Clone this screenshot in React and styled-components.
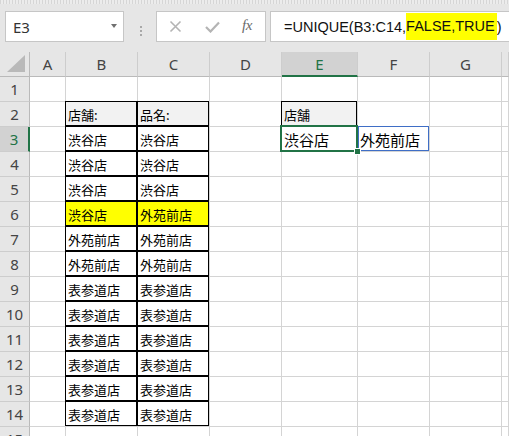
import React from 'react';
import styled, { createGlobalStyle } from 'styled-components';

const Global = createGlobalStyle`
  html, body { margin: 0; padding: 0; background: #fff; }
  body { width: 509px; height: 436px; overflow: hidden; font-family: "Noto Sans", "Liberation Sans", sans-serif; }
`;

const Window = styled.div`
  width: 509px;
  height: 436px;
  overflow: hidden;
  display: flex;
  flex-direction: column;
  background: #fff;
`;

const Toolbar = styled.div`
  flex: none;
  height: 52px;
  box-sizing: border-box;
  display: flex;
  align-items: flex-start;
  padding: 11px 0 0 5px;
  background-color: #e6e6e6;
  background-image: repeating-linear-gradient(90deg, #d6d6d6 0 1px, #ececec 1px 3px);
  background-size: 100% 4px;
  background-repeat: no-repeat;
`;

const NameBox = styled.div`
  width: 119px;
  height: 31px;
  box-sizing: border-box;
  background: #fff;
  border: 1px solid #c6c6c6;
  display: flex;
  align-items: center;
  justify-content: space-between;
  padding: 0 6px 0 7px;
  font-family: "Noto Sans", "Liberation Sans", sans-serif;
  font-size: 15px;
  color: #333;
`;

const Caret = styled.span`
  width: 0;
  height: 0;
  border-left: 3.5px solid transparent;
  border-right: 3.5px solid transparent;
  border-top: 4px solid #707070;
  margin-top: -1px;
`;

const Grip = styled.div`
  width: 16px;
  align-self: stretch;
  display: flex;
  flex-direction: column;
  align-items: center;
  justify-content: center;
  gap: 2px;
  margin: 0 7px 0 9px;
  padding-bottom: 1px;
  & > span {
    width: 2px;
    height: 2px;
    background: #a8a8a8;
  }
`;

const ButtonBox = styled.div`
  width: 110px;
  height: 31px;
  box-sizing: border-box;
  background: #fff;
  border: 1px solid #c6c6c6;
  display: flex;
  align-items: center;
  padding-left: 12px;
  gap: 0;
`;

const IconSlot = styled.span`
  width: ${p => p.$w}px;
  display: flex;
  align-items: center;
  color: ${p => p.$c};
`;

const Fx = styled.span`
  font-family: "Liberation Serif", "DejaVu Serif", serif;
  font-style: italic;
  font-size: 15px;
  color: #6a6a6a;
  letter-spacing: -0.5px;
  margin-top: -2px;
`;

const FormulaInput = styled.div`
  flex: 1;
  height: 31px;
  margin-left: 4px;
  margin-right: -4px;
  box-sizing: border-box;
  background: #fff;
  border: 1px solid #c6c6c6;
  display: flex;
  align-items: center;
  padding-left: 13px;
  font-family: "Liberation Sans", Arial, sans-serif;
  font-size: 14.5px;
  color: #111;
  white-space: nowrap;
`;

const Mark = styled.span`
  display: inline-block;
  height: 27px;
  line-height: 27px;
  background: #ffff00;
  padding-right: 2px;
`;

const Sheet = styled.div`
  display: grid;
  grid-template-columns: 30px 36px 72px 72px 72px 76px 72px 72px 1fr;
  grid-template-rows: 25px repeat(15, 25px);
  background: #fff;
`;

const Corner = styled.div`
  box-sizing: border-box;
  background: #e6e6e6;
  border-right: 1px solid #bababa;
  border-bottom: 1px solid #bababa;
  display: flex;
  align-items: flex-end;
  justify-content: flex-end;
  padding: 0 4px 4px 0;
`;

const ColHead = styled.div`
  box-sizing: border-box;
  background: ${p => (p.$active ? '#d2d2d2' : '#e6e6e6')};
  border-right: 1px solid #cdcdcd;
  border-bottom: ${p => (p.$active ? '2px solid #217346' : '1px solid #bababa')};
  display: flex;
  align-items: center;
  justify-content: center;
  padding-top: ${p => (p.$active ? '1px' : '0')};
  font-family: "Noto Sans", "Liberation Sans", sans-serif;
  font-size: 15px;
  color: ${p => (p.$active ? '#217346' : '#444')};
`;

const RowHead = styled.div`
  box-sizing: border-box;
  background: ${p => (p.$active ? '#d2d2d2' : '#e6e6e6')};
  border-right: ${p => (p.$active ? '2px solid #217346' : '1px solid #bababa')};
  border-bottom: 1px solid #cdcdcd;
  display: flex;
  align-items: center;
  justify-content: center;
  font-family: "Noto Sans", "Liberation Sans", sans-serif;
  font-size: 15px;
  color: ${p => (p.$active ? '#217346' : '#444')};
`;

const Cell = styled.div`
  position: relative;
  z-index: ${p => (p.$selected ? 2 : 'auto')};
  box-sizing: border-box;
  border-right: 1px solid #d4d4d4;
  border-bottom: 1px solid #d4d4d4;
  background: ${p => p.$fill || '#fff'};
  display: flex;
  align-items: center;
  padding: 0 0 0 2px;
  font-family: "Noto Sans CJK JP", "Noto Sans", sans-serif;
  font-size: ${p => (p.$big ? '15px' : '13px')};
  color: #000;
  white-space: nowrap;

  ${p => p.$boxed && `
    &::before {
      content: '';
      position: absolute;
      top: -1px; left: -1px; right: 0; bottom: 0;
      border: 1px solid #000;
      pointer-events: none;
      z-index: 1;
    }
  `}

  ${p => p.$spill && `
    &::before {
      content: '';
      position: absolute;
      top: -1px; left: 0; right: 0; bottom: 0;
      border: 1px solid #3f6ec6;
      pointer-events: none;
      z-index: 1;
    }
  `}

  ${p => p.$selected && `
    &::before {
      content: '';
      position: absolute;
      top: -2px; left: -2px; right: -1px; bottom: -1px;
      border: 2px solid #217346;
      pointer-events: none;
      z-index: 2;
    }
    &::after {
      content: '';
      position: absolute;
      right: -3px; bottom: -3px;
      width: 5px; height: 5px;
      background: #217346;
      box-shadow: 0 0 0 1px #fff;
      z-index: 3;
    }
  `}
`;

const COLS = ['A', 'B', 'C', 'D', 'E', 'F', 'G', 'H'];

const data = {};
const put = (ref, text, opts = {}) => { data[ref] = { text, ...opts }; };

put('B2', '店舗:', { boxed: true, fill: '#f2f2f2' });
put('C2', '品名:', { boxed: true, fill: '#f2f2f2' });
put('E2', '店舗', { boxed: true, fill: '#f2f2f2' });
const body = [
  ['渋谷店', '渋谷店'],
  ['渋谷店', '渋谷店'],
  ['渋谷店', '渋谷店'],
  ['渋谷店', '外苑前店', '#ffff00'],
  ['外苑前店', '外苑前店'],
  ['外苑前店', '外苑前店'],
  ['表参道店', '表参道店'],
  ['表参道店', '表参道店'],
  ['表参道店', '表参道店'],
  ['表参道店', '表参道店'],
  ['表参道店', '表参道店'],
  ['表参道店', '表参道店'],
];
body.forEach(([b, c, fill], i) => {
  put(`B${i + 3}`, b, { boxed: true, fill });
  put(`C${i + 3}`, c, { boxed: true, fill });
});
put('E3', '渋谷店', { big: true, selected: true });
put('F3', '外苑前店', { big: true, spill: true });

const CrossIcon = () => (
  <svg width="13" height="13" viewBox="0 0 13 13">
    <path d="M1.5 1.5 L11.5 11.5 M11.5 1.5 L1.5 11.5" stroke="currentColor" strokeWidth="1.6" fill="none" />
  </svg>
);

const CheckIcon = () => (
  <svg width="15" height="12" viewBox="0 0 15 12">
    <path d="M1 6 L5.5 10.5 L14 1.5" stroke="currentColor" strokeWidth="2.2" fill="none" />
  </svg>
);

const CornerTriangle = () => (
  <svg width="18" height="17" viewBox="0 0 18 17">
    <polygon points="18,0 18,17 0,17" fill="#b9b9b9" />
  </svg>
);

export default function App() {
  const rows = Array.from({ length: 15 }, (_, i) => i + 1);
  return (
    <Window>
      <Global />
      <Toolbar>
        <NameBox>
          <span>E3</span>
          <Caret />
        </NameBox>
        <Grip>
          <span />
          <span />
          <span />
        </Grip>
        <ButtonBox>
          <IconSlot $w={36} $c="#b4b4b4"><CrossIcon /></IconSlot>
          <IconSlot $w={37} $c="#b4b4b4"><CheckIcon /></IconSlot>
          <IconSlot $w={20} $c="#6a6a6a"><Fx>fx</Fx></IconSlot>
        </ButtonBox>
        <FormulaInput>
          =UNIQUE(B3:C14,<Mark>FALSE,TRUE</Mark>)
        </FormulaInput>
      </Toolbar>
      <Sheet>
        <Corner><CornerTriangle /></Corner>
        {COLS.map(c => (
          <ColHead key={c} $active={c === 'E'}>{c === 'H' ? '' : c}</ColHead>
        ))}
        {rows.map(r => (
          <React.Fragment key={r}>
            <RowHead $active={r === 3}>{r}</RowHead>
            {COLS.map(c => {
              const d = data[`${c}${r}`] || {};
              return (
                <Cell
                  key={c}
                  $boxed={d.boxed}
                  $fill={d.fill}
                  $big={d.big}
                  $selected={d.selected}
                  $spill={d.spill}
                >
                  {d.text}
                </Cell>
              );
            })}
          </React.Fragment>
        ))}
      </Sheet>
    </Window>
  );
}
